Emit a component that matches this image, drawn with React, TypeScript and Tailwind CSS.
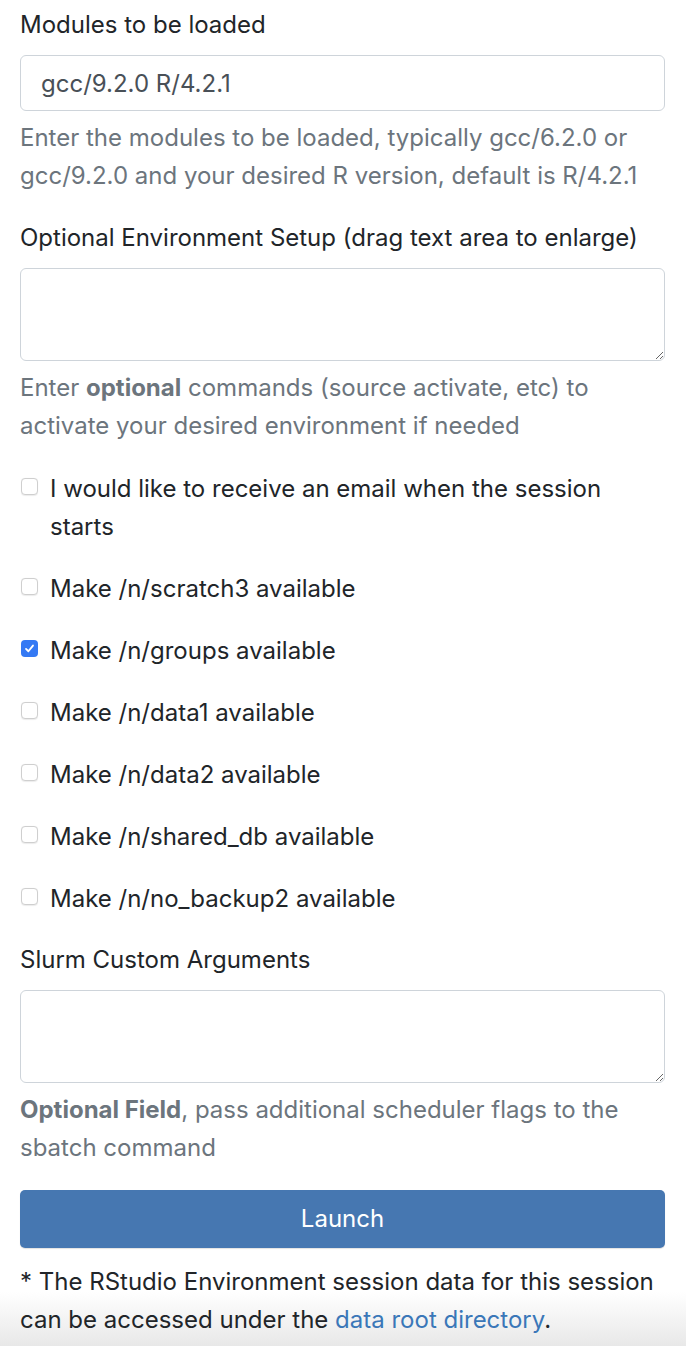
const font = { fontFamily: 'Inter, "Noto Sans", sans-serif' };

const mounts = [
  { label: 'Make /n/scratch3 available', checked: false },
  { label: 'Make /n/groups available', checked: true },
  { label: 'Make /n/data1 available', checked: false },
  { label: 'Make /n/data2 available', checked: false },
  { label: 'Make /n/shared_db available', checked: false },
  { label: 'Make /n/no_backup2 available', checked: false },
];

function Box({ checked }: { checked: boolean }) {
  if (checked) {
    return (
      <span className="mt-[8px] flex h-[17px] w-[17px] shrink-0 items-center justify-center rounded-[4px] bg-[#3479f4]">
        <svg width="11" height="11" viewBox="0 0 12 12" fill="none">
          <path d="M2.2 6.4 L4.8 9 L9.8 2.8" stroke="white" strokeWidth="2" strokeLinecap="round" strokeLinejoin="round" />
        </svg>
      </span>
    );
  }
  return <span className="mt-[8px] h-[17px] w-[17px] shrink-0 rounded-[4px] border border-[#cfcfcf] bg-white shadow-[0_0.5px_1px_rgba(0,0,0,0.08)]" />;
}

function Check({ label, checked }: { label: string; checked: boolean }) {
  return (
    <label className="flex gap-[12px] pl-[21px] pr-[70px] text-[#212529]">
      <Box checked={checked} />
      <span>{label}</span>
    </label>
  );
}

function Help({ children }: { children: React.ReactNode }) {
  return <p className="mt-[8px] text-[#6c757d]">{children}</p>;
}

export default function App() {
  return (
    <div className="flex min-h-[1346px] flex-col bg-white text-[24px] leading-[38px]" style={font}>
      <div className="px-[20px] pr-[21px] pt-[6px]">
        <div className="text-[#212529]">Modules to be loaded</div>
        <input
          readOnly
          value="gcc/9.2.0 R/4.2.1"
          className="mt-[11px] block h-[56px] w-full rounded-[6px] border border-[#ced4da] px-[20px] text-[#495057] outline-none"
        />
        <Help>
          Enter the modules to be loaded, typically gcc/6.2.0 or gcc/9.2.0 and your desired R version, default is R/4.2.1
        </Help>

        <div className="mt-[24px] text-[#212529]">Optional Environment Setup (drag text area to enlarge)</div>
        <textarea className="mt-[11px] block h-[93px] w-full resize-y rounded-[6px] border border-[#ced4da] px-[20px] outline-none" />
        <Help>
          Enter <b className="font-bold">optional</b> commands (source activate, etc) to activate your desired environment if needed
        </Help>
      </div>

      <div className="mt-[25px] flex flex-col gap-[24px]">
        <Check label="I would like to receive an email when the session starts" checked={false} />
        {mounts.map(m => (
          <Check key={m.label} label={m.label} checked={m.checked} />
        ))}
      </div>

      <div className="px-[20px] pr-[21px]">
        <div className="mt-[23px] text-[#212529]">Slurm Custom Arguments</div>
        <textarea className="mt-[11px] block h-[93px] w-full resize-y rounded-[6px] border border-[#ced4da] px-[20px] outline-none" />
        <Help>
          <b className="font-bold">Optional Field</b>, pass additional scheduler flags to the sbatch command
        </Help>
        <button className="mt-[23px] block h-[58px] w-full rounded-[5px] bg-[#4677b1] text-white shadow-[0_1px_1px_rgba(0,0,0,0.12)]">
          Launch
        </button>
      </div>

      <div className="mt-[15px] flex-1 bg-linear-to-b from-white from-35% to-[#e8e8e8] px-[20px] pb-[7px] text-[#212529]">
        * The RStudio Environment session data for this session can be accessed under the{' '}
        <a className="text-[#3a77b8]">data root directory</a>.
      </div>
    </div>
  );
}
